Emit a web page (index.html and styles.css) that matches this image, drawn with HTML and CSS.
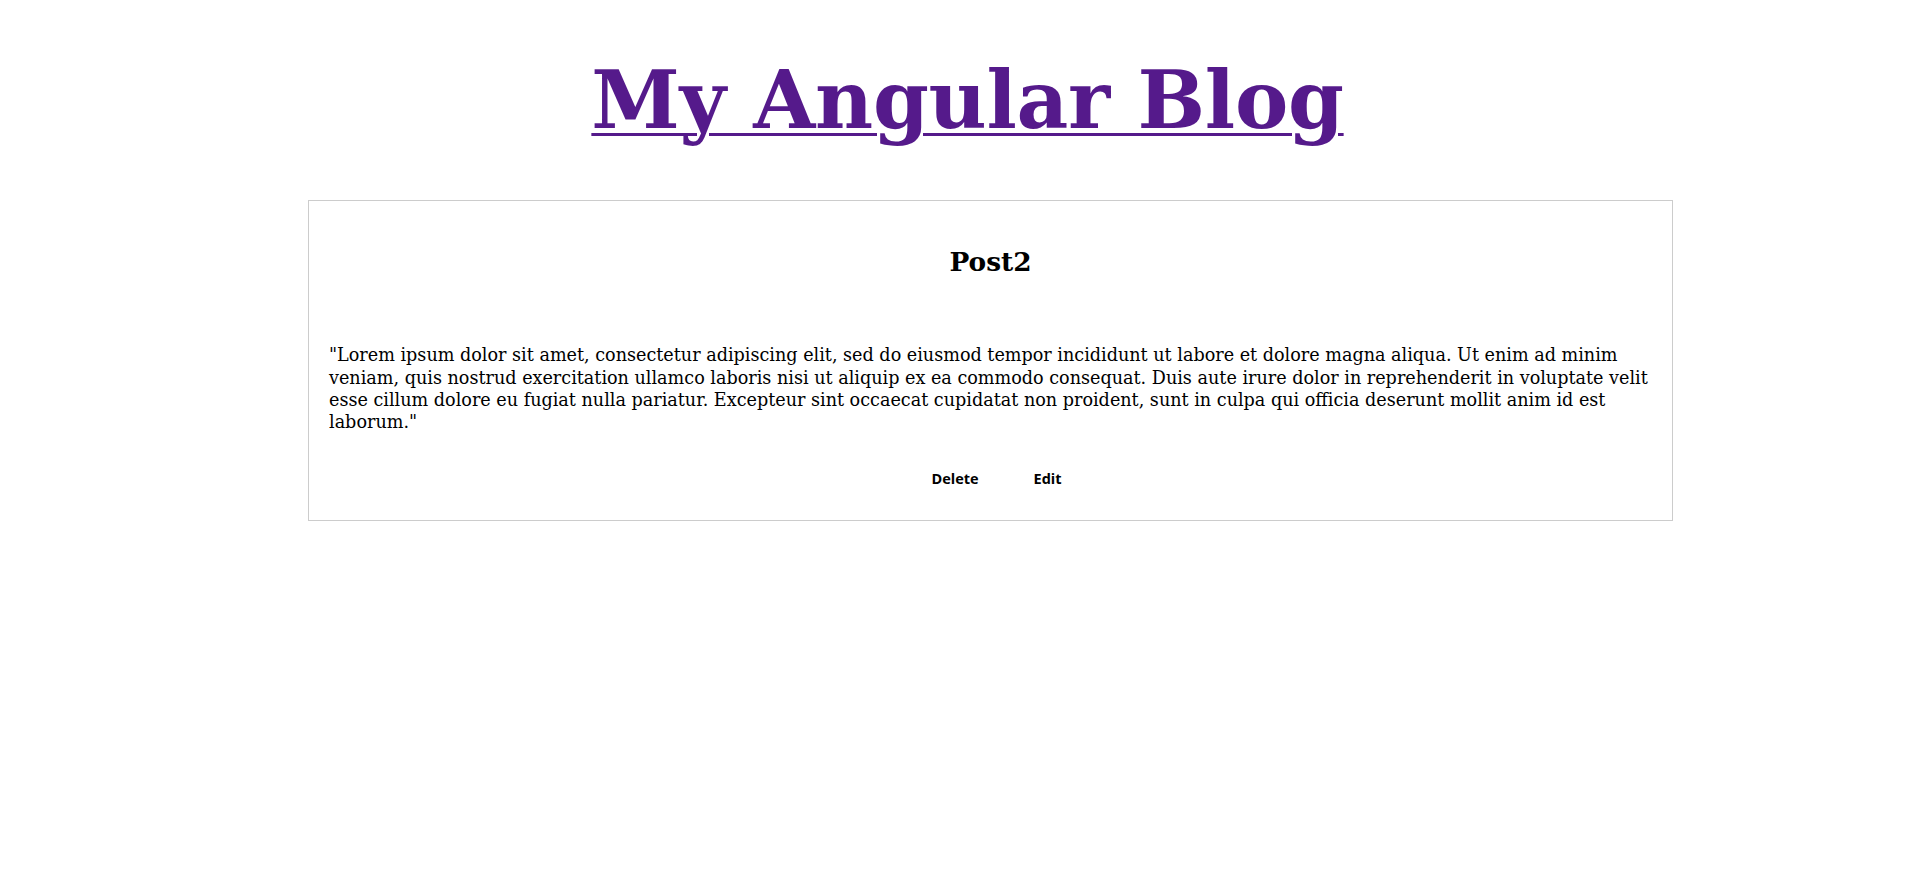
FILE: index.html
```html
<!DOCTYPE html>
<html lang="en">
<head>
<meta charset="utf-8">
<title>My Angular Blog</title>
<link rel="stylesheet" href="styles.css">
</head>
<body>
<h1 class="site-title"><a class="site-link" href="#">My Angular Blog</a></h1>
<div class="post-card">
  <h2 class="post-title">Post2</h2>
  <p class="post-body">"Lorem ipsum dolor sit amet, consectetur adipiscing elit, sed do eiusmod tempor incididunt ut labore et dolore magna aliqua. Ut enim ad minim veniam, quis nostrud exercitation ullamco laboris nisi ut aliquip ex ea commodo consequat. Duis aute irure dolor in reprehenderit in voluptate velit esse cillum dolore eu fugiat nulla pariatur. Excepteur sint occaecat cupidatat non proident, sunt in culpa qui officia deserunt mollit anim id est laborum."</p>
  <div class="post-actions">
    <button class="action-btn">Delete</button>
    <button class="action-btn">Edit</button>
  </div>
</div>
</body>
</html>
```

FILE: styles.css
```css
body {
  margin: 0;
  padding: 0 8px;
  font-family: "DejaVu Serif", serif;
  background: #ffffff;
  color: #000000;
}

.site-title {
  margin: 53.6px 0;
  padding-left: 16px;
  font-size: 80px;
  font-weight: bold;
  letter-spacing: -0.3px;
  text-align: center;
  line-height: 93px;
}

.site-link {
  color: #551a8b;
  text-decoration: underline;
  text-decoration-thickness: 3px;
  text-underline-offset: 5px;
}

.post-card {
  box-sizing: border-box;
  width: 1365px;
  margin-left: 300px;
  border: 1px solid #cccccc;
  padding: 0 20px 32px;
}

.post-title {
  margin: 45px 0 0;
  font-size: 26.4px;
  font-weight: bold;
  text-align: center;
  line-height: normal;
}

.post-body {
  margin: 67px 0 0;
  font-size: 17.6px;
  line-height: 22.4px;
}

.post-actions {
  display: flex;
  justify-content: center;
  gap: 55px;
  margin-top: 35px;
  padding-left: 12px;
}

.action-btn {
  font-family: "Open Sans", sans-serif;
  font-weight: bold;
  font-size: 14.5px;
  line-height: normal;
  background: none;
  border: none;
  padding: 0;
  color: #000000;
}
```
